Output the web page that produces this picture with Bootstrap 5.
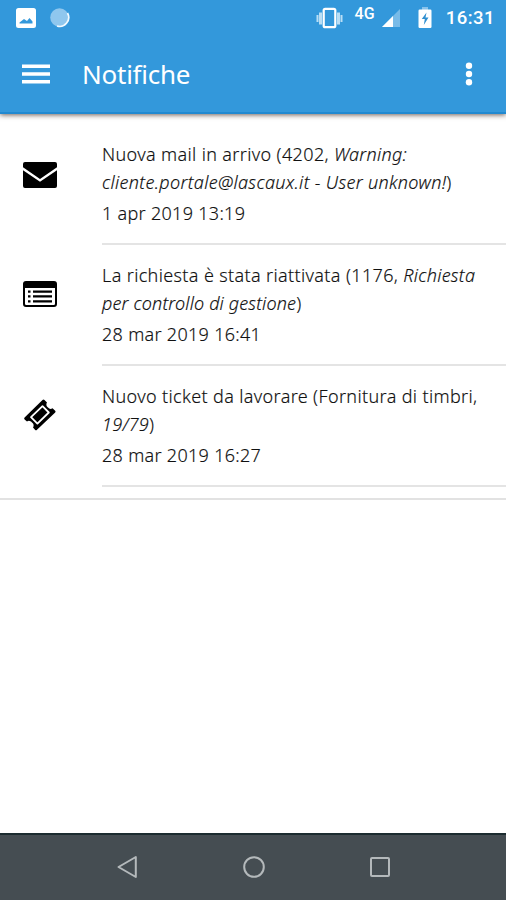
<!DOCTYPE html>
<html lang="it">
<head>
<meta charset="utf-8">
<meta name="viewport" content="width=device-width, initial-scale=1">
<title>Notifiche</title>
<link href="https://cdn.jsdelivr.net/npm/bootstrap@5.3.0/dist/css/bootstrap.min.css" rel="stylesheet">
<style>
body { font-family: "Noto Sans", "Open Sans", sans-serif; background: #fff; color: #111; }
svg { display: block; flex: none; }
.screen { height: 900px; overflow: hidden; }
.app-head { background: #3398db; height: 114px; border-bottom: 2px solid #2189d0; box-shadow: 0 1px 5px rgba(60,40,30,.75); z-index: 1; }
.status { height: 36px; padding: 0 11px 0 16px; font-family: Roboto, sans-serif; font-weight: 500; }
.sync { margin-left: 14px; }
.battery { margin-left: 18px; }
.clock { font-size: 18.5px; line-height: 36px; letter-spacing: .45px; margin-left: 14px; }
.network { font-size: 16px; line-height: 14px; margin: 7px 7px 0 11px; align-self: flex-start; letter-spacing: .1px; }
.toolbar { height: 76px; padding: 0 33px 1px 22px; }
.title { font-size: 26px; line-height: 36px; letter-spacing: -.25px; margin-left: 32px; font-weight: 400; }
.notices { padding-top: 10px; border-bottom: 2px solid #e2e2e2; height: 386px; }
.notice-icon { width: 102px; padding: 0 0 24px 22px; }
.notice-icon.mail { padding-bottom: 20px; }
.notice-text { height: 121px; padding-top: 16px; border-bottom: 2px solid #e4e4e4; font-size: 18px; font-weight: 300; line-height: 28px; letter-spacing: .36px; white-space: nowrap; -webkit-text-stroke: .15px #111; }
.notice-text em { letter-spacing: .28px; }
.notice-text .wide { letter-spacing: .34px; }
.notice-text .tight { letter-spacing: .15px; }
.date { margin-top: 3px; letter-spacing: .3px; }
.keys { height: 67px; background: #454d52; border-top: 2px solid #1c2c30; padding: 0 114px 2px 115px; }
</style>
</head>
<body>
<div class="screen d-flex flex-column">
  <header class="app-head text-white position-relative flex-shrink-0">
    <div class="status d-flex align-items-center">
      <svg width="20" height="20" viewBox="0 0 20 20"><path fill="#fff" fill-rule="evenodd" d="M2.500 0h15A2.500 2.500 0 0 1 20 2.500v15a2.500 2.500 0 0 1-2.500 2.500h-15A2.500 2.500 0 0 1 0 17.500v-15A2.500 2.500 0 0 1 2.500 0ZM3.500 15.500h13v-2l-3-3.500-2.500 3-3-2-4.500 3.500Z"/></svg>
      <svg class="sync" width="20" height="20" viewBox="0 0 20 20"><circle cx="9.500" cy="9.500" r="9.300" fill="#8fc7ee"/><path d="M17.500 5A9 9 0 0 1 7 18" fill="none" stroke="#f2faff" stroke-width="1.700"/></svg>
      <svg class="ms-auto" width="28" height="22" viewBox="0 0 28 22"><path fill="#b9def5" d="M.5 8h2v7h-2zM3 5.500h3v12H3zM24.500 8h2v7h-2zM21 5.500h3v12h-3z"/><rect x="7.700" y="1.800" width="11.600" height="18.400" rx="1.500" fill="none" stroke="#fff" stroke-width="2.200"/></svg>
      <span class="network">4G</span>
      <svg width="18" height="18" viewBox="0 0 18 18"><path fill="#78bbe8" d="M18 0v18H0z"/><path fill="#fff" d="M11 7v11H0z"/></svg>
      <svg class="battery" width="14" height="22" viewBox="0 0 14 22"><path fill="#88c3eb" d="M4 0h6v3H4z"/><rect x=".5" y="2.500" width="13" height="18.500" rx="1.200" fill="#fff"/><path fill="#2f8fd0" d="M8.500 5.500 3.800 12h3l-1 6 4.700-7.500h-3z"/></svg>
      <span class="clock">16:31</span>
    </div>
    <div class="toolbar d-flex align-items-center">
      <svg width="28" height="20" viewBox="0 0 28 20"><path fill="#fff" d="M0 .5h28V4H0zM0 8.300h28v3.500H0zM0 16.100h28v3.500H0z"/></svg>
      <h1 class="title mb-0">Notifiche</h1>
      <svg class="ms-auto" width="8" height="24" viewBox="0 0 8 24"><g fill="#fff"><circle cx="4" cy="3.700" r="3.200"/><circle cx="4" cy="12" r="3.200"/><circle cx="4" cy="20.300" r="3.200"/></g></svg>
    </div>
  </header>
  <main class="notices flex-shrink-0">
    <div class="d-flex align-items-center">
      <div class="notice-icon mail flex-shrink-0"><svg width="36" height="28" viewBox="0 0 36 28"><path d="M3 1h30a2 2 0 0 1 2 2v3.300L18 18 1 6.300V3a2 2 0 0 1 2-2ZM1 9.300l17 11.500L35 9.300V25a2 2 0 0 1-2 2H3a2 2 0 0 1-2-2Z"/></svg></div>
      <div class="notice-text flex-grow-1">Nuova mail in arrivo (4202, <em>Warning:</em><br><em class="wide">cliente.portale@lascaux.it - User unknown!</em>)<div class="date">1 apr 2019 13:19</div></div>
    </div>
    <div class="d-flex align-items-center">
      <div class="notice-icon flex-shrink-0"><svg width="36" height="28" viewBox="0 0 36 28"><path fill-rule="evenodd" d="M4 1h28a3 3 0 0 1 3 3v20a3 3 0 0 1-3 3H4a3 3 0 0 1-3-3V4a3 3 0 0 1 3-3ZM3 8v15.800q0 1.200 1.200 1.200h27.600q1.200 0 1.200-1.200V8Z"/><path d="M6 10.500h2.500v2.200H6zM11 10.500h19v2.200H11zM6 15.300h2.500v2.200H6zM11 15.300h19v2.200H11zM6 20.200h2.500v2.200H6zM11 20.200h19v2.200H11z"/></svg></div>
      <div class="notice-text flex-grow-1">La richiesta è stata riattivata (1176, <em>Richiesta</em><br><em class="tight">per controllo di gestione</em>)<div class="date">28 mar 2019 16:41</div></div>
    </div>
    <div class="d-flex align-items-center">
      <div class="notice-icon flex-shrink-0"><svg width="36" height="34" viewBox="0 0 36 34"><path d="M22.500 2 25 4.500a3.500 3.500 0 0 0 1 5 3.500 3.500 0 0 0 4.500.8l2.700 2.500q.8.800 0 1.600L15 31.700q-1 1-2 0L11 29.500a3.500 3.500 0 0 0-1-5 3.500 3.500 0 0 0-5-1l-2.400-2q-1-1 0-2L20.500 2q1-1 2 0Z"/><path d="M20.500 8.200 26.800 14.500 15.400 25.600 9 19.200Z" fill="none" stroke="#fff" stroke-width="1.800" stroke-linejoin="round"/></svg></div>
      <div class="notice-text flex-grow-1">Nuovo ticket da lavorare (Fornitura di timbri,<br><em>19/79</em>)<div class="date">28 mar 2019 16:27</div></div>
    </div>
  </main>
  <footer class="keys mt-auto d-flex align-items-center justify-content-between flex-shrink-0">
    <svg width="24" height="24" viewBox="0 0 24 24"><path d="M20.800 2v20L3.500 12Z" fill="none" stroke="#b4b9bb" stroke-width="2" stroke-linejoin="round"/></svg>
    <svg width="24" height="24" viewBox="0 0 24 24"><circle cx="12" cy="12" r="9.800" fill="none" stroke="#b4b9bb" stroke-width="2"/></svg>
    <svg width="24" height="24" viewBox="0 0 24 24"><rect x="3" y="3" width="18" height="18" rx="1" fill="none" stroke="#b4b9bb" stroke-width="2"/></svg>
  </footer>
</div>
<script src="https://cdn.jsdelivr.net/npm/bootstrap@5.3.0/dist/js/bootstrap.bundle.min.js"></script>
</body>
</html>
